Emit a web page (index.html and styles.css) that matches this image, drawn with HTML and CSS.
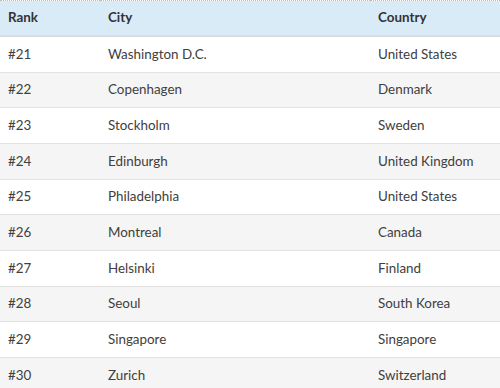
FILE: index.html
```html
<!DOCTYPE html>
<html>
<head>
<meta charset="utf-8">
<link rel="stylesheet" href="styles.css">
</head>
<body>
<table class="rank-table">
  <thead>
    <tr><th class="c-rank">Rank</th><th class="c-city">City</th><th class="c-country">Country</th></tr>
  </thead>
  <tbody>
    <tr><td>#21</td><td>Washington D.C.</td><td>United States</td></tr>
    <tr><td>#22</td><td>Copenhagen</td><td>Denmark</td></tr>
    <tr><td>#23</td><td>Stockholm</td><td>Sweden</td></tr>
    <tr><td>#24</td><td>Edinburgh</td><td>United Kingdom</td></tr>
    <tr><td>#25</td><td>Philadelphia</td><td>United States</td></tr>
    <tr><td>#26</td><td>Montreal</td><td>Canada</td></tr>
    <tr><td>#27</td><td>Helsinki</td><td>Finland</td></tr>
    <tr><td>#28</td><td>Seoul</td><td>South Korea</td></tr>
    <tr><td>#29</td><td>Singapore</td><td>Singapore</td></tr>
    <tr><td>#30</td><td>Zurich</td><td>Switzerland</td></tr>
  </tbody>
</table>
</body>
</html>
```
FILE: styles.css
```css
html, body {
  margin: 0;
  padding: 0;
  background: #fff;
}
body {
  font-family: Lato, "Open Sans", sans-serif;
  font-size: 13.4px;
  color: #404040;
  overflow: hidden;
}
.rank-table {
  width: 500px;
  border-collapse: collapse;
  border-top: 1px dotted #bbb;
}
.rank-table th, .rank-table td {
  text-align: left;
  padding: 0 0 0 8px;
  vertical-align: middle;
}
.rank-table th {
  background: #d9ebf6;
  color: #333;
  font-weight: 700;
  height: 31px;
  padding-bottom: 3px;
  border-bottom: 2px solid #dcdcdc;
}
.rank-table td {
  height: 33.67px;
  padding-bottom: 1px;
  border-bottom: 1px solid #e2e2e2;
}
.rank-table tbody tr:nth-child(even) td {
  background: #f5f5f5;
}
.c-rank { width: 92px; }
.c-city { width: 262px; }
```
